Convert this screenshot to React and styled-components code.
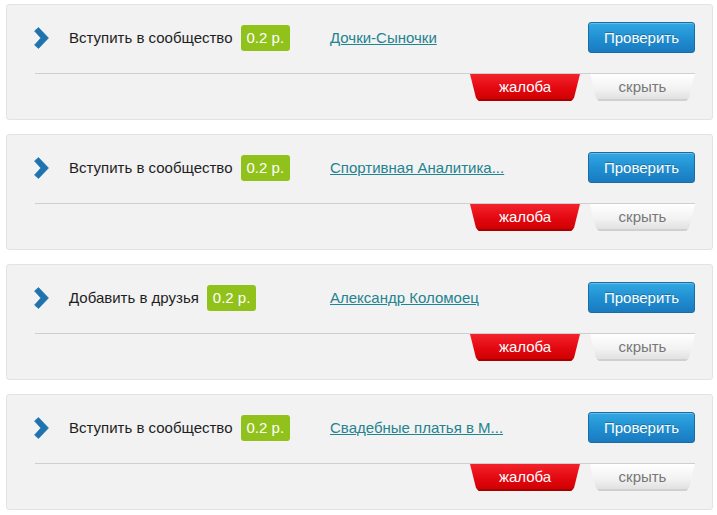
import styled, { createGlobalStyle } from 'styled-components';

const GlobalStyle = createGlobalStyle`
  body {
    margin: 0;
    background: #fff;
    font-family: "Liberation Sans", Arial, sans-serif;
  }
`;

const tasks = [
  { action: 'Вступить в сообщество', price: '0.2 р.', target: 'Дочки-Сыночки' },
  { action: 'Вступить в сообщество', price: '0.2 р.', target: 'Спортивная Аналитика...' },
  { action: 'Добавить в друзья', price: '0.2 р.', target: 'Александр Коломоец' },
  { action: 'Вступить в сообщество', price: '0.2 р.', target: 'Свадебные платья в М...' },
];

function Chevron() {
  return (
    <svg width="15" height="22" viewBox="0 0 15 22">
      <path
        d="M0.5 4 L4.5 0.5 L14.5 11 L4.5 21.5 L0.5 18 L6.8 11 Z"
        fill="#1f73ae"
        stroke="#1f73ae"
        strokeWidth="0.6"
        strokeLinejoin="round"
      />
    </svg>
  );
}

function TaskCard({ action, price, target }) {
  return (
    <Card>
      <Row>
        <Task>
          <Chevron />
          <Action>{action}</Action>
          <Price>{price}</Price>
        </Task>
        <TargetLink href="#">{target}</TargetLink>
        <CheckButton>Проверить</CheckButton>
      </Row>
      <Tabs>
        <Tab $variant="danger">жалоба</Tab>
        <Tab $variant="plain">скрыть</Tab>
      </Tabs>
    </Card>
  );
}

export default function App() {
  return (
    <>
      <GlobalStyle />
      <List>
        {tasks.map((t, i) => (
          <TaskCard key={i} {...t} />
        ))}
      </List>
    </>
  );
}

const List = styled.div`
  display: flex;
  flex-direction: column;
  gap: 14px;
  padding: 4px 4px 0 6px;
`;

const Card = styled.div`
  box-sizing: border-box;
  height: 116px;
  padding: 17px 17px 0 28px;
  background: #f2f2f2;
  border: 1px solid #e3e3e3;
  border-radius: 3px;
`;

const Row = styled.div`
  display: flex;
  align-items: center;
  height: 31px;
  padding-bottom: 20px;
  border-bottom: 1px solid #cfcfcf;
`;

const Task = styled.div`
  display: flex;
  align-items: center;
  width: 295px;
  flex-shrink: 0;

  svg {
    margin-left: -1px;
    margin-right: 20px;
  }
`;

const Action = styled.span`
  font-size: 15px;
  color: #1e1e1e;
`;

const Price = styled.span`
  margin-left: 8px;
  padding: 0 6px;
  height: 26px;
  line-height: 26px;
  background: #91c21c;
  border-radius: 3px;
  color: #fff;
  font-size: 15px;
`;

const TargetLink = styled.a`
  flex: 1;
  font-size: 15px;
  color: #23838f;
  text-decoration: underline;
`;

const CheckButton = styled.button`
  width: 107px;
  height: 31px;
  padding: 0;
  border: 1px solid #1a6ca6;
  border-radius: 3px;
  background: linear-gradient(#33a8e2, #2090d2 50%, #1a7ac0);
  color: #fff;
  font-family: inherit;
  font-size: 15px;
  text-shadow: 0 -1px 0 rgba(0, 0, 0, 0.25);
  box-shadow: inset 0 1px 0 rgba(255, 255, 255, 0.25);
`;

const Tabs = styled.div`
  display: flex;
  justify-content: flex-end;
  gap: 10px;
`;

const Tab = styled.div`
  width: ${({ $variant }) => ($variant === 'danger' ? '110px' : '105px')};
  height: 27px;
  line-height: 25px;
  text-align: center;
  font-size: 15px;
  clip-path: polygon(
    0 0,
    100% 0,
    calc(100% - 6px) calc(100% - 3px),
    calc(100% - 9px) 100%,
    9px 100%,
    6px calc(100% - 3px)
  );
  color: ${({ $variant }) => ($variant === 'danger' ? '#fff' : '#777')};
  background: ${({ $variant }) =>
    $variant === 'danger'
      ? 'linear-gradient(#f3232b, #e2070f 55%, #cc0000)'
      : 'linear-gradient(#ffffff, #f2f2f2 55%, #dedede)'};
  box-shadow: ${({ $variant }) =>
    $variant === 'danger'
      ? 'inset 0 -2px 0 #a80000'
      : 'inset 0 -2px 0 #d0d0d0'};
`;
